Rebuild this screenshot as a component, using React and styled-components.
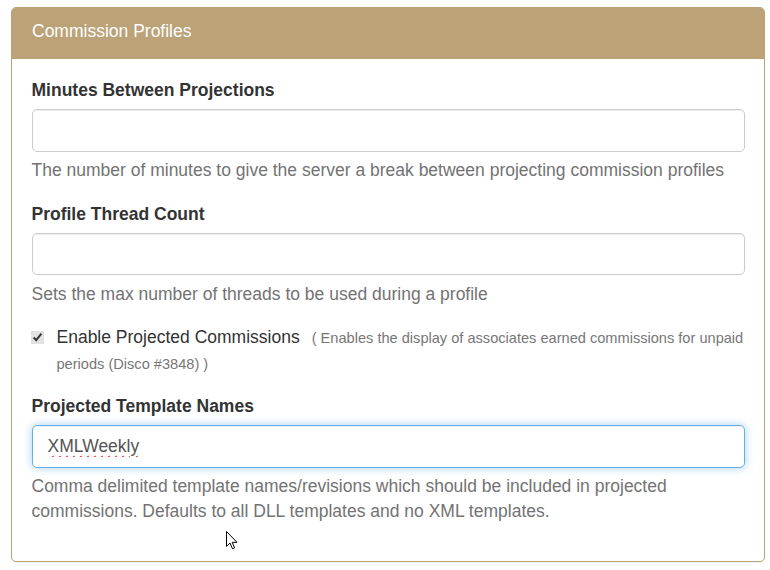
import styled, { createGlobalStyle } from 'styled-components';

const GlobalStyle = createGlobalStyle`
    html, body {
        margin: 0;
        padding: 0;
        background: #fff;
    }
    body {
        font-family: "Liberation Sans", Arial, sans-serif;
        font-size: 17.5px;
        line-height: 25px;
        color: #333;
    }
    * {
        box-sizing: border-box;
    }
`;

const Page = styled.div`
    padding: 7px 5px 8px 11px;
    position: relative;
`;

const Panel = styled.div`
    border: 1px solid #bba277;
    border-radius: 5px;
    background: #fff;
    box-shadow: 0 1px 1px rgba(0, 0, 0, 0.05);
    overflow: hidden;
`;

const Heading = styled.div`
    background: #bba277;
    color: #fff;
    padding: 10.5px 20px 14.5px;
    border-bottom: 1px solid #bba277;
    font-size: 17.5px;
    line-height: 25px;
`;

const Body = styled.div`
    padding: 18.75px 19px 18.75px 19.5px;
`;

const FormGroup = styled.div`
    margin-bottom: 18.75px;
`;

const Label = styled.label`
    display: block;
    font-weight: 700;
    margin-bottom: 6.25px;
    color: #333;
`;

const Input = styled.input`
    display: block;
    width: 100%;
    height: 42.5px;
    padding: 7.5px 15px;
    font-family: inherit;
    font-size: 17.5px;
    color: #555;
    background: #fff;
    border: 1px solid ${(p) => (p.$focused ? '#66afe9' : '#ccc')};
    border-radius: 5px;
    outline: none;
    box-shadow: ${(p) =>
        p.$focused
            ? 'inset 0 1px 1px rgba(0,0,0,.075), 0 0 8px rgba(102,175,233,.6)'
            : 'inset 0 1px 1px rgba(0,0,0,.075)'};
    text-decoration: ${(p) => (p.$misspelled ? 'underline wavy #e22' : 'none')};
    text-decoration-thickness: 1px;
    text-underline-offset: 3px;
`;

const Help = styled.span`
    display: block;
    margin-top: 6.25px;
    margin-bottom: 12.5px;
    color: #737373;
`;

const CheckRow = styled.div`
    margin: 12.5px 0 16.5px;
`;

const CheckLabel = styled.label`
    display: block;
    padding-left: 25px;
    position: relative;
`;

const Check = styled.input`
    position: absolute;
    left: -0.5px;
    top: 6px;
    width: 13px;
    height: 13px;
    margin: 0;
    accent-color: #e3e3e3;
`;

const Note = styled.small`
    font-size: 14.6px;
    color: #777;
    margin-left: 12px;
`;

const Cursor = styled.svg`
    position: absolute;
    left: 226px;
    top: 531px;
    pointer-events: none;
`;

export default function App() {
    return (
        <Page>
            <GlobalStyle />
            <Panel>
                <Heading>Commission Profiles</Heading>
                <Body>
                    <FormGroup>
                        <Label>Minutes Between Projections</Label>
                        <Input type="text" readOnly />
                        <Help>
                            The number of minutes to give the server a break
                            between projecting commission profiles
                        </Help>
                    </FormGroup>
                    <FormGroup>
                        <Label>Profile Thread Count</Label>
                        <Input type="text" readOnly />
                        <Help>
                            Sets the max number of threads to be used during a
                            profile
                        </Help>
                    </FormGroup>
                    <CheckRow>
                        <CheckLabel>
                            <Check type="checkbox" defaultChecked />
                            Enable Projected Commissions
                            <Note>
                                ( Enables the display of associates earned
                                commissions for unpaid periods (Disco #3848) )
                            </Note>
                        </CheckLabel>
                    </CheckRow>
                    <FormGroup>
                        <Label>Projected Template Names</Label>
                        <Input
                            type="text"
                            defaultValue="XMLWeekly"
                            readOnly
                            $focused
                            $misspelled
                        />
                        <Help>
                            Comma delimited template names/revisions which
                            should be included in projected commissions.
                            Defaults to all DLL templates and no XML templates.
                        </Help>
                    </FormGroup>
                </Body>
            </Panel>
            <Cursor width="12" height="19" viewBox="0 0 12 19">
                <path
                    d="M0.5 0.5 L0.5 15.5 L4 12 L6.5 17.8 L8.6 16.9 L6.2 11.3 L11 11.3 Z"
                    fill="#fff"
                    stroke="#000"
                    strokeWidth="1"
                    strokeLinejoin="round"
                />
            </Cursor>
        </Page>
    );
}
